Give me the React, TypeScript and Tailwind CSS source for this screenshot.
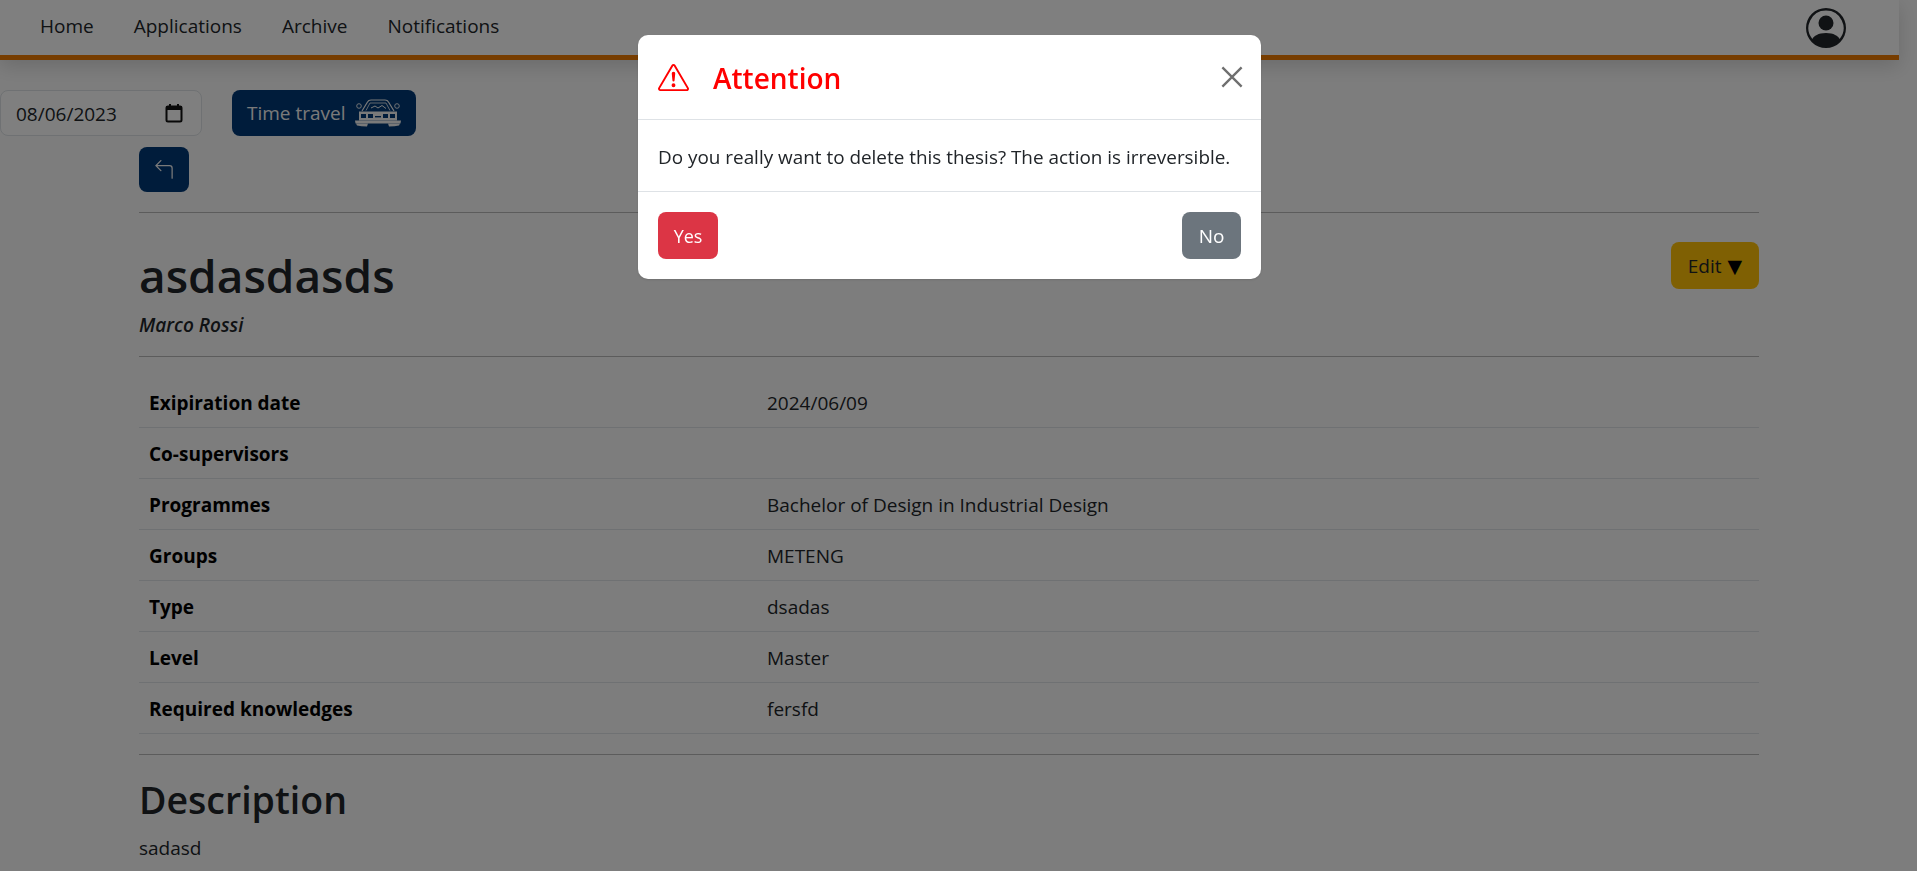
import { BsArrow90DegLeft, BsExclamationTriangle, BsPersonCircle } from "react-icons/bs";

const rows = [
  ["Exipiration date", "2024/06/09"],
  ["Co-supervisors", ""],
  ["Programmes", "Bachelor of Design in Industrial Design"],
  ["Groups", "METENG"],
  ["Type", "dsadas"],
  ["Level", "Master"],
  ["Required knowledges", "fersfd"],
];

function CarIcon() {
  return (
    <svg width="48" height="28" viewBox="0 0 48 28" fill="none" className="text-[#f4f4f4]">
      {/* roof and windscreen */}
      <path d="M8 12 L13.500 3 Q14.500 1 17 1 L31 1 Q33.500 1 34.500 3 L40 12" stroke="currentColor" strokeWidth="1.200" />
      <path d="M12 11.500 L16 4 H32 L36 11.500" stroke="currentColor" strokeWidth="0.800" />
      <path d="M17 9 L21 7 L24 9 L28 6.500 L32 9.500" stroke="currentColor" strokeWidth="1" />
      {/* mirrors */}
      <circle cx="5" cy="7" r="2.300" stroke="currentColor" strokeWidth="0.900" />
      <circle cx="43" cy="7" r="2.300" stroke="currentColor" strokeWidth="0.900" />
      {/* body */}
      <path d="M5 12.500 H43 V21.500 H5 Z" fill="currentColor" />
      <rect x="7" y="15" width="5" height="4" fill="#003876" />
      <rect x="14" y="15" width="5" height="4" fill="#003876" />
      <rect x="21" y="17" width="6" height="1.400" fill="#003876" />
      <rect x="29" y="15" width="5" height="4" fill="#003876" />
      <rect x="36" y="15" width="5" height="4" fill="#003876" />
      {/* bumper and tyres */}
      <path d="M1 21.500 H47 L46.500 24.500 H1.500 Z" fill="currentColor" />
      <path d="M2 24.500 H14 L13 27.500 Q7 27.500 3 26.500 Z" fill="currentColor" />
      <path d="M46 24.500 H34 L35 27.500 Q41 27.500 45 26.500 Z" fill="currentColor" />
    </svg>
  );
}

export default function App() {
  return (
    <div className="relative h-[871px] w-[1917px] overflow-hidden bg-[#fbfbfb] font-['Open_Sans','Liberation_Sans',sans-serif] text-[#212529]">
      {/* Navbar */}
      <nav className="flex h-[60px] w-[1899px] items-center justify-between border-b-[5px] border-[#ef7b00] bg-white pl-10 pr-[53px] shadow-[0_6px_20px_rgba(0,0,0,0.15)]">
        <div className="-mt-[2px] flex gap-10 text-[19px] text-[#212529]">
          <span>Home</span>
          <span>Applications</span>
          <span>Archive</span>
          <span>Notifications</span>
        </div>
        <BsPersonCircle className="h-10 w-10 text-[#212529]" />
      </nav>

      {/* Time travel */}
      <div className="mt-[30px] flex items-start gap-[30px]">
        <div className="flex h-[46px] w-[202px] items-center justify-between rounded-lg border border-[#dee2e6] bg-white pl-[15px] pr-[17px] text-[19px]">
          <span className="pt-[2px]">08/06/2023</span>
          <svg width="20" height="20" viewBox="0 0 20 20" fill="none">
            <path d="M6 1v3M14 1v3" stroke="#111" strokeWidth="2" />
            <rect x="2.500" y="3.500" width="15" height="15" rx="1.500" stroke="#111" strokeWidth="2" />
            <rect x="2" y="3" width="16" height="4" fill="#111" />
          </svg>
        </div>
        <button type="button" className="flex h-[46px] w-[184px] items-center gap-[8px] rounded-lg bg-[#003876] pl-[15px] text-[19px] text-[#f4f4f4]">
          Time travel
          <CarIcon />
        </button>
      </div>

      {/* Content */}
      <main className="ml-[139px] mt-[11px] w-[1620px]">
        <button type="button" className="flex h-[45px] w-[50px] items-center justify-center rounded-lg bg-[#003876] text-[#f4f4f4]">
          <BsArrow90DegLeft className="h-5 w-5" />
        </button>
        <hr className="mt-5 border-t border-[#b8b8b8]" />

        <div className="mt-[27px] flex items-start justify-between">
          <h1 className="text-[46px] font-semibold leading-[70px]">asdasdasds</h1>
          <button type="button" className="mt-[2px] flex h-[47px] w-[88px] items-center justify-center gap-[6px] rounded-lg bg-[#ffc107] pt-[2px] text-[19px] text-[#212529]">
            Edit <span className="font-['DejaVu_Sans'] text-[19px] text-black">▼</span>
          </button>
        </div>
        <p className="text-[19px] font-semibold italic leading-[30px]">Marco Rossi</p>
        <hr className="mt-[16px] border-t border-[#b8b8b8]" />

        <table className="mt-[19px] w-full border-collapse text-[19px]">
          <tbody>
            {rows.map(([label, value]) => (
              <tr key={label} className="h-[51px] border-b border-[#dee2e6]">
                <td className="w-[628px] pl-[10px] pt-[3px] font-bold text-black">{label}</td>
                <td className="pt-[3px]">{value}</td>
              </tr>
            ))}
          </tbody>
        </table>
        <hr className="mt-[20px] border-t border-[#b8b8b8]" />

        <h2 className="mt-[15px] text-[37.500px] font-semibold leading-[60px]">Description</h2>
        <p className="mt-[3px] text-[19px] leading-[30px]">sadasd</p>
      </main>

      {/* Backdrop + modal */}
      <div className="fixed inset-0 flex items-start justify-center bg-black/50 pr-[18px] pt-[35px]">
        <div className="w-[623px] rounded-[10px] bg-white shadow-sm">
          <div className="flex h-[85px] items-center justify-between border-b border-[#dee2e6] pl-5 pr-[18px]">
            <div className="flex items-center gap-6 text-[#ff0000]">
              <BsExclamationTriangle className="h-[31px] w-[31px]" />
              <h5 className="pt-[2px] text-[28px] font-semibold">Attention</h5>
            </div>
            <svg width="22" height="22" viewBox="0 0 16 16" className="text-[#6f6f6f]">
              <path d="M1 1l14 14M15 1L1 15" stroke="currentColor" strokeWidth="1.700" />
            </svg>
          </div>
          <div className="flex h-[72px] items-center border-b border-[#dee2e6] px-5 pt-[3px] text-[18.900px]">
            Do you really want to delete this thesis? The action is irreversible.
          </div>
          <div className="flex h-[87px] items-center justify-between px-5">
            <button type="button" className="h-[47px] w-[60px] rounded-lg bg-[#dc3545] pt-[2px] text-[18px] font-medium text-white">Yes</button>
            <button type="button" className="h-[47px] w-[59px] rounded-lg bg-[#6c757d] pt-[2px] text-[19px] font-medium text-white">No</button>
          </div>
        </div>
      </div>
    </div>
  );
}
